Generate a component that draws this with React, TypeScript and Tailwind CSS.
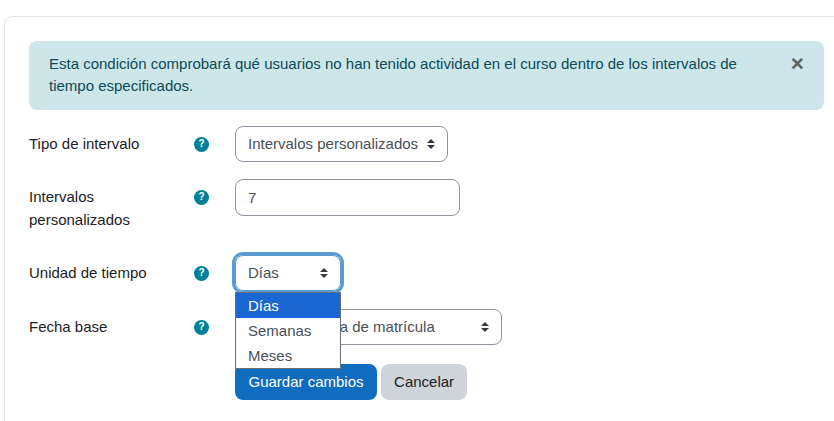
function HelpIcon() {
  return (
    <span className="flex h-[15px] w-[15px] items-center justify-center rounded-full bg-[#008196] text-[10px] leading-none font-bold text-white">
      ?
    </span>
  );
}

function Arrows() {
  return (
    <svg width="10" height="12" viewBox="0 0 10 12" className="shrink-0">
      <path d="M5 1 L9 5 H1 Z M5 11 L1 7 H9 Z" fill="#343a40" />
    </svg>
  );
}

function Row({
  label,
  className,
  children,
}: {
  label: string;
  className: string;
  children: React.ReactNode;
}) {
  return (
    <div className={`flex items-center ${className}`}>
      <div className="w-[165px] text-[#1d2125]">{label}</div>
      <div className="flex h-[22px] w-[41px] items-center">
        <HelpIcon />
      </div>
      {children}
    </div>
  );
}

export default function App() {
  return (
    <div
      className="h-[421px] w-[834px] overflow-hidden bg-white pt-4 pl-1 text-[15px] leading-[22.5px]"
      style={{ fontFamily: '"Liberation Sans", Arial, sans-serif' }}
    >
      <div className="h-[440px] w-[860px] rounded-lg border border-[#e3e4e5] pt-6 pl-6">
        <div className="flex h-[69px] w-[795px] justify-between rounded-lg bg-[#cde6ea] pt-[11.6px] pr-5 pl-5 text-[#0e4a55]">
          <p className="w-[710px]">
            Esta condición comprobará qué usuarios no han tenido actividad en el curso dentro de los
            intervalos de tiempo especificados.
          </p>
          <span className="text-[22.5px] leading-[22.5px] font-bold text-[#5c6163]">×</span>
        </div>

        <Row label="Tipo de intervalo" className="mt-4 h-[36px]">
          <div className="flex h-9 w-[213px] items-center justify-between rounded-lg border border-[#8f959e] pr-[11px] pl-3 text-[#495057]">
            <span>Intervalos personalizados</span>
            <Arrows />
          </div>
        </Row>

        <div className="mt-[17px] flex h-[60px]">
          <div className="w-[165px] pt-[7px] text-[#1d2125]">Intervalos personalizados</div>
          <div className="flex h-[36px] w-[41px] items-center">
            <HelpIcon />
          </div>
          <div className="flex h-[37px] w-[225px] items-center rounded-lg border border-[#8f959e] pt-[1px] pl-3 text-[#495057]">
            7
          </div>
        </div>

        <Row label="Unidad de tiempo" className="mt-[16px] h-[36px]">
          <div className="relative h-[36px] w-[106px]">
            <div className="flex h-[36px] w-[106px] items-center justify-between rounded-lg border border-[#5b9bd5] pr-[11px] pl-3 text-[#495057] shadow-[0_0_0_3px_#5b9bd5]">
              <span>Días</span>
              <Arrows />
            </div>
            <div className="absolute top-[37px] left-0 z-10 w-[106px] border border-[#6b6f75] bg-white text-[#495057]">
              <div className="h-[25px] bg-[#1a66d2] pl-3 leading-[25px] text-white">Días</div>
              <div className="h-[25px] pl-3 leading-[25px]">Semanas</div>
              <div className="h-[25px] pl-3 leading-[25px]">Meses</div>
            </div>
          </div>
        </Row>

        <Row label="Fecha base" className="mt-[18px] h-[36px]">
          <div className="flex h-9 w-[267px] items-center justify-between rounded-lg border border-[#8f959e] pr-[11px] pl-3 text-[#495057]">
            <span>Desde la fecha de matrícula</span>
            <Arrows />
          </div>
        </Row>

        <div className="mt-[19px] ml-[206px] flex gap-1">
          <button className="h-9 rounded-lg bg-[#0f6cbf] px-[13.5px] text-white">Guardar cambios</button>
          <button className="h-9 rounded-lg bg-[#ced4da] px-[13px] text-[#1d2125]">Cancelar</button>
        </div>
      </div>
    </div>
  );
}
